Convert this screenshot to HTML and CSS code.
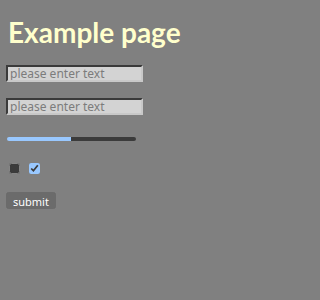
FILE: index.html
```html
<!DOCTYPE html>
<html lang="en">
<head>
<meta charset="utf-8">
<title>Example page</title>
<link rel="stylesheet" href="styles.css">
</head>
<body>
<main class="page">
  <h1 class="title">Example page</h1>
  <div class="row"><input class="field" type="text" placeholder="please enter text"></div>
  <div class="row"><input class="field" type="text" placeholder="please enter text"></div>
  <div class="row"><input class="slider" type="range" min="0" max="100" value="50"></div>
  <div class="row checks"><input class="check" type="checkbox"><input class="check" type="checkbox" checked></div>
  <div class="row action"><button class="submit" type="button">submit</button></div>
</main>
</body>
</html>
```

FILE: styles.css
```css
html {
  color-scheme: dark;
}
body {
  margin: 0;
  background: #808080;
  font-family: Lato, "Noto Sans", sans-serif;
}
.page {
  display: flex;
  flex-direction: column;
  align-items: flex-start;
  padding: 15px 6px 0;
  gap: 16px;
}
.title {
  margin: 0 0 0 2px;
  font-size: 28px;
  font-weight: 700;
  line-height: 34px;
  color: #ffffcc;
}
.row {
  display: flex;
  align-items: center;
}
.field {
  margin: 0;
  width: 137px;
  height: 17px;
  box-sizing: border-box;
  padding: 0 2px;
  background: #d3d3d3;
  border: 2px solid;
  border-color: #3a3a3a #c8c8c8 #c8c8c8 #3a3a3a;
  font-family: "Noto Sans", sans-serif;
  font-size: 12px;
  color: #222;
}
.field::placeholder {
  color: #7c7c7c;
}
.slider {
  -webkit-appearance: none;
  appearance: none;
  margin: 6px 0 6px 1px;
  width: 129px;
  height: 4px;
  border-radius: 2px;
  background: linear-gradient(to right, #99c8ff 0 50%, #3b3b3b 50% 100%);
}
.slider::-webkit-slider-thumb {
  -webkit-appearance: none;
  appearance: none;
  width: 0;
  height: 0;
}
.checks {
  gap: 9px;
  padding-left: 3px;
}
.check {
  margin: 0;
  width: 11px;
  height: 11px;
}
.action {
  margin-top: 2px;
}
.submit {
  margin: 0;
  padding: 0 5px;
  height: 17px;
  font-family: "Noto Sans", sans-serif;
  font-size: 11px;
  line-height: 15px;
}
```
